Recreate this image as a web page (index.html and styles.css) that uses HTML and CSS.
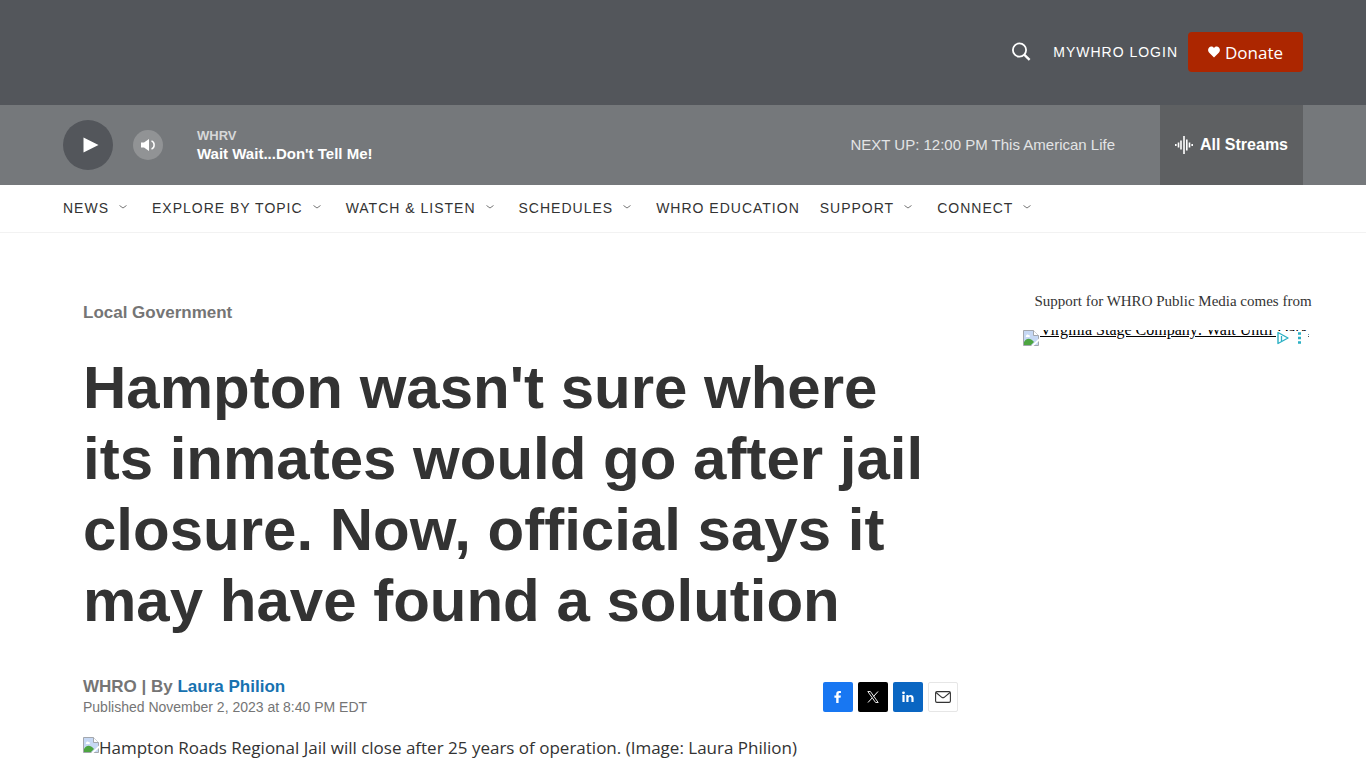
FILE: index.html
```
<!DOCTYPE html>
<html lang="en">
<head>
  <meta charset="UTF-8">
  <meta name="viewport" content="width=device-width, initial-scale=1.0">
  <title>Hampton wasn't sure where its inmates would go after jail closure</title>
  <link rel="stylesheet" href="styles.css">
</head>
<body>
  <header>
    <div class="top-bar">
      <div class="wrapper top-inner">
        <button class="search-button" type="button" aria-label="Search">
          <svg width="20" height="20" viewBox="0 0 20 20" fill="none" stroke="#fff">
            <circle cx="8.5" cy="8" r="6.6" stroke-width="1.8"/>
            <path d="M13.2 12.7L18.6 17.8" stroke-width="2.4"/>
          </svg>
        </button>
        <a class="login-link" href="#">MYWHRO LOGIN</a>
        <a class="donate-button" href="#">
          <svg width="12" height="12" viewBox="0 0 12 12" fill="#fff">
            <path d="M6 11.5L1 6.4C-.3 5-.2 2.6 1.1 1.4 2.5.1 4.6.2 6 2 7.4.2 9.5.1 10.9 1.4 12.2 2.6 12.3 5 11 6.4Z"/>
          </svg>
          Donate
        </a>
      </div>
    </div>

    <!-- Persistent audio player -->
    <div class="player">
      <div class="wrapper player-inner">
        <button class="play-button" type="button" aria-label="Play">
          <svg width="16" height="16" viewBox="0 0 16 16" fill="#fff"><path d="M.5 .5V15.5L15.5 8Z"/></svg>
        </button>
        <button class="volume-button" type="button" aria-label="Volume">
          <svg width="16" height="14" viewBox="0 0 16 14">
            <path d="M1 4.5H4L9 1V13L4 9.5H1Z" fill="#fff"/>
            <path d="M11.5 3C15 4 15 10 11.5 11" fill="none" stroke="#fff" stroke-width="1.5"/>
          </svg>
        </button>
        <div class="now-playing">
          <div class="station">WHRV</div>
          <div class="program">Wait Wait...Don't Tell Me!</div>
        </div>
        <div class="next-up">NEXT UP: 12:00 PM This American Life</div>
        <button class="streams-button" type="button">
          <svg width="18" height="18" viewBox="0 0 18 18" stroke="#fff" stroke-width="1.6">
            <path d="M.8 8V10M3.5 6.5V11.5M6 4.5V13.5M9 0V18M11.8 3.5V14.5M14.5 6.5V11.5M17.2 8V10"/>
          </svg>
          All Streams
        </button>
      </div>
    </div>

    <nav class="main-nav">
      <ul class="wrapper nav-list">
        <li><a href="#">NEWS</a><svg class="arrow" viewBox="0 0 8 4"><path d="M.5.5L4 3 7.5.5"/></svg></li>
        <li><a href="#">EXPLORE BY TOPIC</a><svg class="arrow" viewBox="0 0 8 4"><path d="M.5.5L4 3 7.5.5"/></svg></li>
        <li><a href="#">WATCH &amp; LISTEN</a><svg class="arrow" viewBox="0 0 8 4"><path d="M.5.5L4 3 7.5.5"/></svg></li>
        <li><a href="#">SCHEDULES</a><svg class="arrow" viewBox="0 0 8 4"><path d="M.5.5L4 3 7.5.5"/></svg></li>
        <li><a href="#">WHRO EDUCATION</a></li>
        <li><a href="#">SUPPORT</a><svg class="arrow" viewBox="0 0 8 4"><path d="M.5.5L4 3 7.5.5"/></svg></li>
        <li><a href="#">CONNECT</a><svg class="arrow" viewBox="0 0 8 4"><path d="M.5.5L4 3 7.5.5"/></svg></li>
      </ul>
    </nav>
  </header>

  <main class="page">
    <article>
      <a class="section-link" href="#">Local Government</a>
      <h1>Hampton wasn't sure where its inmates would go after jail closure. Now, official says it may have found a solution</h1>

      <div class="article-info">
        <div class="byline">
          <div class="author">WHRO | By <a href="#">Laura Philion</a></div>
          <div class="published">Published November 2, 2023 at 8:40 PM EDT</div>
        </div>
        <div class="social">
          <a class="facebook" href="#" aria-label="Facebook">
            <svg width="8" height="12" viewBox="0 0 8 12" fill="#fff"><path d="M2.2 12V6.7H.4V4.6H2.2V3.2C2.2 1.1 3.3 0 5.2 0 6 0 6.7.1 7 .2V2.1H5.8C4.9 2.1 4.6 2.5 4.6 3.2V4.6H6.9L6.6 6.7H4.6V12Z"/></svg>
          </a>
          <a class="twitter" href="#" aria-label="X">
            <svg width="12" height="12" viewBox="0 0 12 12" fill="none" stroke="#fff"><path d="M.8.5H3.4L11.2 11.5H8.6Z" stroke-width=".9"/><path d="M11 .5L6.5 5.5M5.3 6.8L1 11.5"/></svg>
          </a>
          <a class="linkedin" href="#" aria-label="LinkedIn">
            <svg width="12" height="12" viewBox="0 0 12 12" fill="#fff"><circle cx="1.5" cy="1.8" r="1.4"/><path d="M.4 4H2.6V11H.4ZM4.3 4H6.4V5C7.9 3.2 11.6 3.5 11.6 6.9V11H9.4V7.3C9.4 5.2 6.5 5.2 6.5 7.3V11H4.3Z"/></svg>
          </a>
          <a class="email" href="#" aria-label="Email">
            <svg width="16" height="12" viewBox="0 0 16 12" fill="none" stroke="#333" stroke-width="1.1"><rect x=".6" y=".6" width="14.8" height="10.8" rx="1.3"/><path d="M1 1.5L6.8 6.3C7.6 6.9 8.4 6.9 9.2 6.3L15 1.5"/></svg>
          </a>
        </div>
      </div>

      <div class="lead-image">
        <svg class="missing" viewBox="0 0 16 16">
          <path d="M.5.5H10.5L15.5 5.5V15.5H.5Z" fill="#c6d8f4" stroke="#a3a7ad"/>
          <path d="M3 6C3 4.5 5 4 5.6 5 7 4.9 7.3 6.5 6.5 7H3.5C2.8 7 2.6 6.5 3 6Z" fill="#fff"/>
          <path d="M1 15V12C3.5 8 7 7.5 11 12L8 15Z" fill="#4da541"/>
          <path d="M10.5.5V5.5H15.5" fill="#fff" stroke="#a3a7ad"/>
          <path d="M8 16L16 8.5V11L10.5 16Z" fill="#fff"/>
        </svg><span>Hampton Roads Regional Jail will close after 25 years of operation. (Image: Laura Philion)</span>
      </div>
    </article>

    <aside>
      <p class="sponsor-label">Support for WHRO Public Media comes from</p>
      <div class="ad">
        <a class="ad-link" href="#"><svg class="missing" viewBox="0 0 16 16">
          <path d="M.5.5H10.5L15.5 5.5V15.5H.5Z" fill="#c6d8f4" stroke="#a3a7ad"/>
          <path d="M3 6C3 4.5 5 4 5.6 5 7 4.9 7.3 6.5 6.5 7H3.5C2.8 7 2.6 6.5 3 6Z" fill="#fff"/>
          <path d="M1 15V12C3.5 8 7 7.5 11 12L8 15Z" fill="#4da541"/>
          <path d="M10.5.5V5.5H15.5" fill="#fff" stroke="#a3a7ad"/>
          <path d="M8 16L16 8.5V11L10.5 16Z" fill="#fff"/>
        </svg><span class="ad-text">Virginia Stage Company: Wait Until Dark</span></a>
        <!-- Ad choices badge -->
        <div class="ad-badge">
          <svg width="32" height="14" viewBox="0 0 32 14" fill="none" stroke="#2bb0c4">
            <path d="M2 1.5V12.5L12 7Z" stroke-width="1.4" stroke-linejoin="round"/>
            <path d="M5.5 5V10" stroke-width="1.3"/>
            <path d="M22 2.5H25M22 7H25M22 11.5H25" stroke-width="2.5"/>
          </svg>
        </div>
      </div>
    </aside>
  </main>
</body>
</html>
```
FILE: styles.css
```
* {
  box-sizing: border-box;
}
body {
  margin: 0;
  background-color: #fff;
  color: #333;
  font-family: "Liberation Sans", Arial, sans-serif;
}
a {
  color: inherit;
  text-decoration: none;
}
button {
  border: 0;
  padding: 0;
  background: none;
  color: #fff;
  font-family: inherit;
  cursor: pointer;
}
svg {
  display: block;
}
.wrapper {
  max-width: 1240px;
  margin: 0 auto;
}

/* Top bar */
.top-bar {
  background-color: #53565b;
  color: #fff;
}
.top-inner {
  display: flex;
  align-items: center;
  justify-content: flex-end;
  padding: 32px 0 33px;
}
.search-button {
  margin-right: 22px;
}
.login-link {
  margin-right: 10px;
  font-size: 14px;
  letter-spacing: 1px;
}
.donate-button {
  display: flex;
  align-items: center;
  justify-content: center;
  gap: 5px;
  width: 115px;
  height: 40px;
  border-radius: 4px;
  background-color: #ac2600;
  font-family: "Open Sans", "Noto Sans", sans-serif;
  font-size: 17px;
}

/* Player */
.player {
  background-color: #75787b;
  color: #fff;
}
.player-inner {
  display: flex;
  align-items: center;
  height: 80px;
}
.play-button,
.volume-button {
  display: flex;
  align-items: center;
  justify-content: center;
  border-radius: 50%;
}
.play-button {
  width: 50px;
  height: 50px;
  margin-right: 20px;
  padding-left: 5px;
  background-color: #53565b;
}
.volume-button {
  width: 30px;
  height: 30px;
  margin-right: 34px;
  background-color: #919395;
}
.now-playing {
  flex: 1;
  font-weight: bold;
}
.station {
  color: #d6d7d8;
  font-size: 13px;
  line-height: 18px;
}
.program {
  font-size: 15px;
  line-height: 18px;
}
.next-up {
  margin-right: 45px;
  color: #e3e4e5;
  font-size: 15px;
  line-height: 18px;
}
.streams-button {
  display: flex;
  align-items: center;
  justify-content: center;
  gap: 7px;
  width: 143px;
  height: 80px;
  background-color: #5e6062;
  font-size: 16px;
  font-weight: bold;
}

/* Navigation */
.main-nav {
  border-bottom: 1px solid #f2f2f2;
}
.nav-list {
  display: flex;
  align-items: center;
  gap: 20px;
  height: 47px;
  padding: 0 0 2px;
  list-style: none;
  font-size: 14px;
  letter-spacing: 1px;
}
.nav-list li {
  display: flex;
  align-items: center;
}
.arrow {
  width: 8px;
  height: 4px;
  margin: 0 5px 2px 10px;
  fill: none;
  stroke: #777;
}

/* Article */
.page {
  display: grid;
  grid-template-columns: 1fr 300px;
  column-gap: 65px;
  max-width: 1280px;
  margin: 0 auto;
  padding: 60px 0 20px 40px;
}
.section-link {
  display: block;
  margin-top: 10px;
  color: #757575;
  font-size: 17px;
  font-weight: bold;
  line-height: 20px;
}
h1 {
  margin: 29px 0 40px;
  font-size: 60px;
  line-height: 71px;
}
.article-info {
  display: flex;
  align-items: center;
  justify-content: space-between;
}
.byline {
  color: #757575;
}
.author {
  font-size: 17px;
  font-weight: bold;
  line-height: 21px;
}
.author a {
  color: #1772b0;
}
.published {
  font-size: 14px;
  line-height: 20px;
}
.social {
  display: flex;
  gap: 5px;
}
.social a {
  display: flex;
  align-items: center;
  justify-content: center;
  width: 30px;
  height: 30px;
  border-radius: 2px;
}
.facebook {
  background-color: #1877f2;
}
.twitter {
  background-color: #000;
}
.linkedin {
  background-color: #0a66c2;
}
.email {
  border: 1px solid #e6e6e6;
}
.lead-image {
  display: flex;
  margin-top: 20px;
  font-family: "Open Sans", "Noto Sans", sans-serif;
  font-size: 17px;
  line-height: 22px;
}
.missing {
  flex: none;
  width: 16px;
  height: 16px;
}

/* Sidebar */
.sponsor-label {
  margin: 0 0 20px;
  font-family: "Liberation Serif", "Times New Roman", serif;
  font-size: 15px;
  line-height: 17px;
  text-align: center;
}
.ad {
  position: relative;
  height: 16px;
  overflow: hidden;
}
.ad-link {
  display: flex;
  align-items: flex-start;
  gap: 1px;
  height: 16px;
  color: #000;
  font-family: "Liberation Serif", "Times New Roman", serif;
  font-size: 16px;
  text-decoration: underline;
}
.ad-text {
  line-height: 0;
}
.ad-badge {
  position: absolute;
  top: 1px;
  right: 15px;
  background-color: #fff;
}
```
